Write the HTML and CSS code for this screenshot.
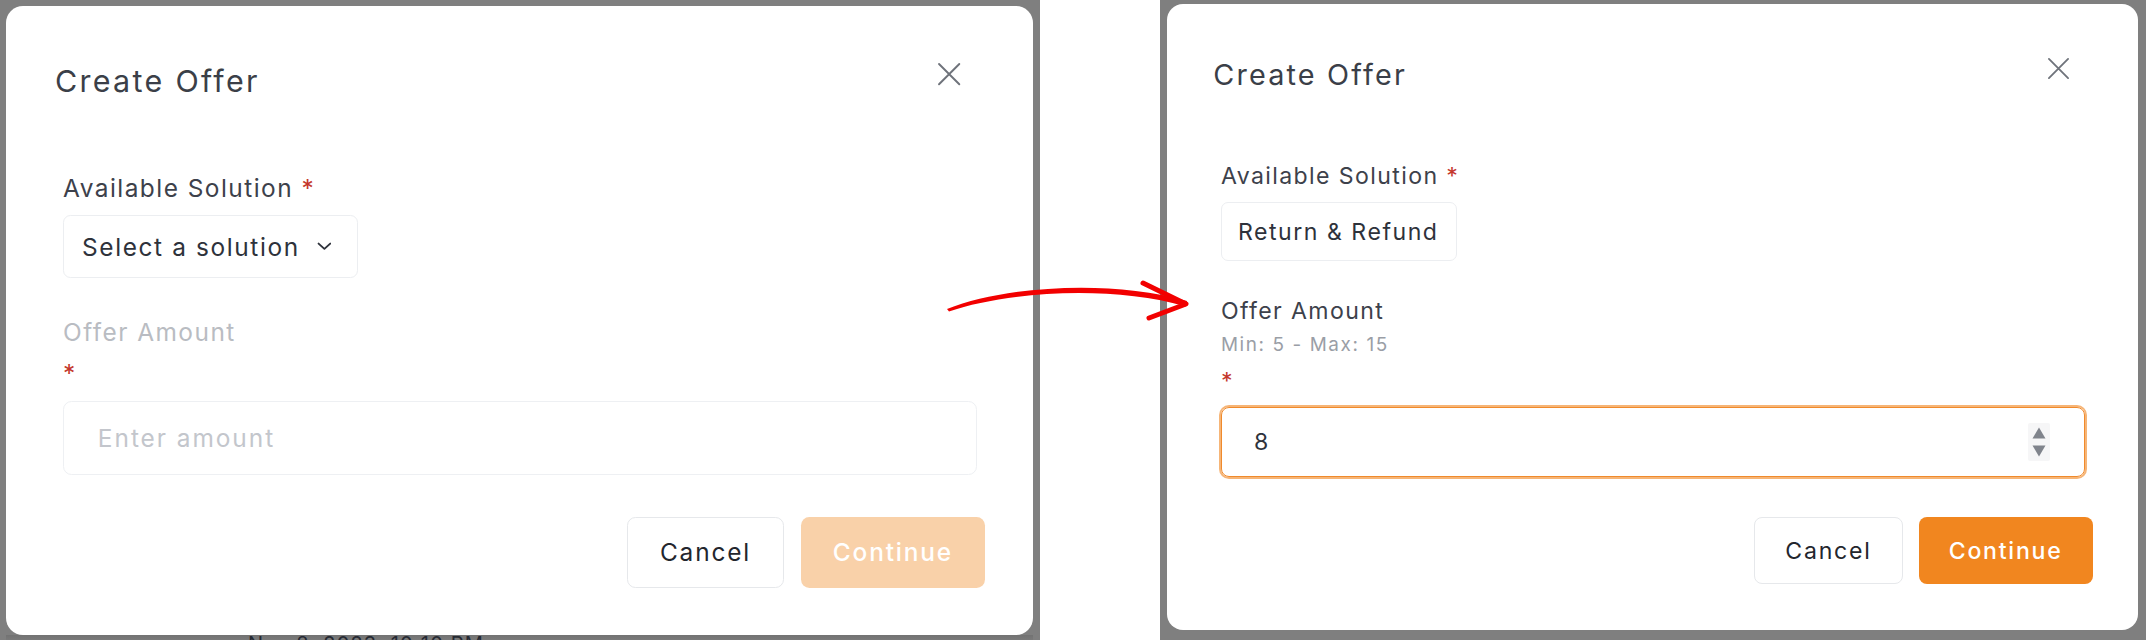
FILE: index.html
```html
<!DOCTYPE html>
<html lang="en">
<head>
<meta charset="utf-8">
<title>Create Offer</title>
<link rel="stylesheet" href="styles.css">
</head>
<body>
<div class="page">
  <section class="panel panel-left">
    <div class="modal modal-lg">
      <header class="modal-head">
        <h2 class="modal-title">Create Offer</h2>
        <button class="close" aria-label="Close">
          <svg viewBox="0 0 24 24"><path d="M2 2 L22 22 M22 2 L2 22"/></svg>
        </button>
      </header>
      <div class="modal-body">
        <div class="field">
          <label class="label">Available Solution <span class="req">*</span></label>
          <div class="select">
            <span>Select a solution</span>
            <svg class="chev" viewBox="0 0 14 8"><path d="M1.5 1.5 L7 6.5 L12.5 1.5"/></svg>
          </div>
        </div>
        <div class="field field-amount is-disabled">
          <label class="label">Offer Amount</label>
          <span class="req req-line">*</span>
          <div class="input"><span class="placeholder">Enter amount</span></div>
        </div>
      </div>
      <footer class="modal-foot">
        <button class="btn btn-cancel">Cancel</button>
        <button class="btn btn-primary btn-disabled">Continue</button>
      </footer>
    </div>
    <div class="peek"><span>Nov 8, 2023, 10:10 PM</span></div>
  </section>

  <div class="gap"></div>

  <section class="panel panel-right">
    <div class="modal">
      <header class="modal-head">
        <h2 class="modal-title">Create Offer</h2>
        <button class="close" aria-label="Close">
          <svg viewBox="0 0 24 24"><path d="M2 2 L22 22 M22 2 L2 22"/></svg>
        </button>
      </header>
      <div class="modal-body">
        <div class="field">
          <label class="label">Available Solution <span class="req">*</span></label>
          <div class="select select-chosen"><span>Return &amp; Refund</span></div>
        </div>
        <div class="field field-amount">
          <label class="label">Offer Amount</label>
          <span class="hint">Min: 5 - Max: 15</span>
          <span class="req req-line">*</span>
          <div class="input is-focused">
            <span class="value">8</span>
            <svg class="spin" viewBox="0 0 22 38">
              <rect x="0" y="0" width="22" height="38" rx="2" fill="#f6f6f7"/>
              <path d="M11 4.5 L17.5 15.5 L4.5 15.5 Z"/>
              <path d="M4.5 22.5 L17.5 22.5 L11 33.5 Z"/>
            </svg>
          </div>
        </div>
      </div>
      <footer class="modal-foot">
        <button class="btn btn-cancel">Cancel</button>
        <button class="btn btn-primary">Continue</button>
      </footer>
    </div>
  </section>

  <svg class="arrow" viewBox="0 0 2146 640" aria-hidden="true">
    <path class="arrow-body" d="M947 309 C1005 286 1110 279 1187 301 L1186 306.5 C1110 284.5 1005 292 949 311.5 Z"/>
    <path class="arrow-head" d="M1143 283 L1186 304 L1149 318"/>
  </svg>
</div>
</body>
</html>
```
FILE: styles.css
```css
* {
  box-sizing: border-box;
  margin: 0;
  padding: 0;
}

html,
body {
  width: 2146px;
  height: 640px;
  overflow: hidden;
  background: #ffffff;
}

body {
  font-family: Inter, "Noto Sans", "Liberation Sans", sans-serif;
}

.page {
  position: relative;
  display: flex;
  width: 2146px;
  height: 640px;
}

.panel {
  display: flex;
  flex-direction: column;
  background: #7f7f7f;
}

.panel-left {
  width: 1040px;
  padding: 6px 7px 0 6px;
}

.peek {
  height: 5px;
  overflow: hidden;
  padding-left: 242px;
  background: linear-gradient(#727272, #7a7a7a);
}

.peek span {
  display: block;
  margin-top: -1px;
  font-size: 20px;
  line-height: 20px;
  letter-spacing: 0.06em;
  color: #262a33;
}

.gap {
  width: 120px;
  background: #ffffff;
}

.panel-right {
  width: 986px;
  padding: 4px 8px 10px 7px;
}

.modal {
  --u: 1px;
  flex: 1;
  display: flex;
  flex-direction: column;
  background: #ffffff;
  border-radius: calc(16 * var(--u));
}

.modal-lg {
  --u: 1.058px;
}

.modal-head {
  display: flex;
  justify-content: space-between;
  align-items: flex-start;
  padding: calc(44 * var(--u)) calc(59.4 * var(--u)) 0 calc(46.3 * var(--u));
}

.modal-title {
  margin-top: calc(8 * var(--u));
  font-size: calc(28.8 * var(--u));
  line-height: calc(38 * var(--u));
  letter-spacing: 0.075em;
  font-weight: 400;
  color: #3b3f48;
}

.close {
  display: flex;
  align-items: center;
  justify-content: center;
  width: calc(40 * var(--u));
  height: calc(40 * var(--u));
  border: 0;
  background: none;
}

.close svg {
  width: calc(23 * var(--u));
  height: calc(23 * var(--u));
  fill: none;
  stroke: #6f737b;
  stroke-width: 1.9;
  stroke-linecap: round;
}

.modal-body {
  padding: calc(65.5 * var(--u)) calc(52.9 * var(--u)) 0 calc(53.9 * var(--u));
}

.field {
  display: flex;
  flex-direction: column;
  align-items: flex-start;
}

.label {
  font-size: calc(23.1 * var(--u));
  line-height: calc(33 * var(--u));
  letter-spacing: 0.06em;
  color: #3d414b;
}

.req {
  color: #c4372c;
}

.select {
  display: inline-flex;
  align-items: center;
  gap: calc(16 * var(--u));
  height: calc(59 * var(--u));
  margin-top: calc(9.5 * var(--u));
  padding: 0 calc(24 * var(--u)) 0 calc(17 * var(--u));
  border: 1px solid #eceef1;
  border-radius: calc(7 * var(--u));
  font-size: calc(23.1 * var(--u));
  letter-spacing: 0.066em;
  color: #2e323b;
}

.select-chosen {
  padding: 0 calc(17 * var(--u)) 0 calc(16 * var(--u));
}

.chev {
  width: calc(14 * var(--u));
  height: calc(8 * var(--u));
  fill: none;
  stroke: #2e323b;
  stroke-width: 1.8;
  stroke-linecap: round;
  stroke-linejoin: round;
}

.field-amount {
  align-items: stretch;
  margin-top: calc(33.5 * var(--u));
}

.is-disabled {
  margin-top: calc(35 * var(--u));
}

.is-disabled .label {
  color: #b9bcc2;
}

.is-disabled .req-line {
  margin-top: calc(5.5 * var(--u));
}

.hint {
  margin-top: calc(4 * var(--u));
  font-size: calc(18.9 * var(--u));
  line-height: calc(26 * var(--u));
  letter-spacing: 0.085em;
  color: #9a9ea6;
}

.req-line {
  margin-top: calc(7 * var(--u));
  font-size: calc(23.1 * var(--u));
  line-height: calc(33 * var(--u));
}

.input {
  display: flex;
  align-items: center;
  justify-content: space-between;
  height: calc(70 * var(--u));
  margin-top: calc(9.5 * var(--u));
  padding: 0 calc(34 * var(--u)) 0 calc(32 * var(--u));
  border: 1px solid #eef0f3;
  border-radius: calc(8 * var(--u));
  font-size: calc(23.1 * var(--u));
  letter-spacing: 0.08em;
}

.placeholder {
  color: #c3c6cc;
}

.value {
  color: #2e323b;
}

.is-focused {
  border-color: #f08a2c;
  box-shadow: 0 0 0 calc(2 * var(--u)) #f6b577;
}

.spin {
  width: calc(22 * var(--u));
  height: calc(38 * var(--u));
  fill: #80848c;
}

.modal-foot {
  display: flex;
  justify-content: flex-end;
  gap: calc(16 * var(--u));
  padding: calc(40 * var(--u)) calc(45.4 * var(--u)) 0 0;
}

.btn {
  height: calc(67 * var(--u));
  border-radius: calc(8 * var(--u));
  font-family: inherit;
  font-size: calc(23.1 * var(--u));
  letter-spacing: 0.075em;
}

.btn-cancel {
  width: calc(148.4 * var(--u));
  background: #ffffff;
  border: 1px solid #e6e8eb;
  color: #23262d;
}

.btn-primary {
  width: calc(174 * var(--u));
  background: #f1861f;
  border: 0;
  color: #ffffff;
  font-weight: 500;
}

.btn-disabled {
  background: #f9d1a9;
}

.arrow {
  position: absolute;
  left: 0;
  top: 0;
  width: 2146px;
  height: 640px;
  pointer-events: none;
}

.arrow-body {
  fill: #f20000;
}

.arrow-head {
  fill: none;
  stroke: #f20000;
  stroke-width: 5;
  stroke-linecap: round;
  stroke-linejoin: round;
}
```
